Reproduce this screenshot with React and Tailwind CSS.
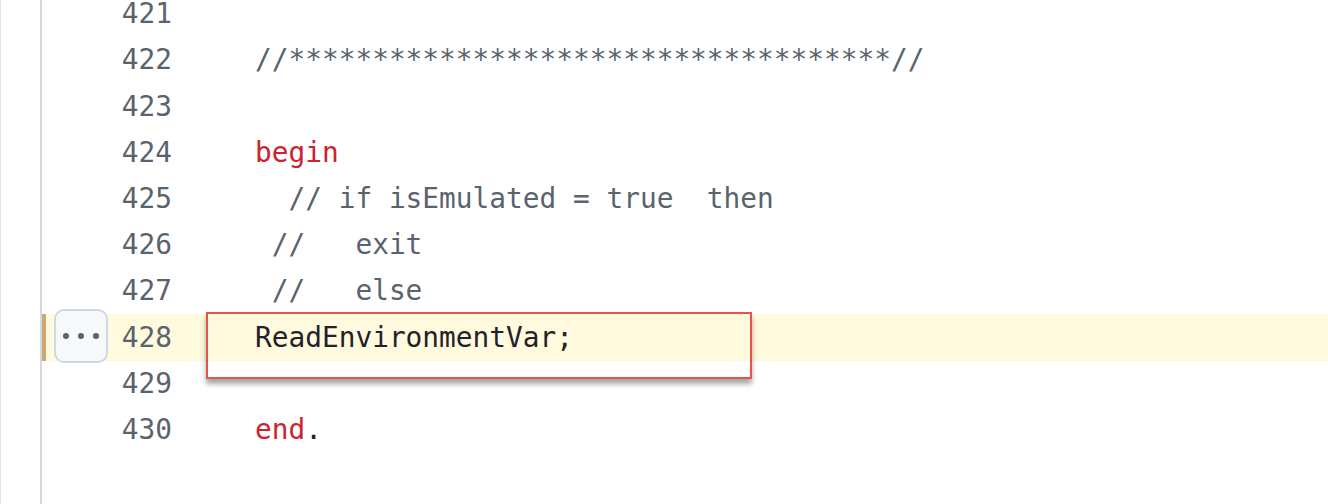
import React from "react";

const lines = [
  { n: 421, code: [] },
  { n: 422, code: [["c", "//" + "*".repeat(36) + "//"]] },
  { n: 423, code: [] },
  { n: 424, code: [["k", "begin"]] },
  { n: 425, code: [["c", "  // if isEmulated = true  then"]] },
  { n: 426, code: [["c", " //   exit"]] },
  { n: 427, code: [["c", " //   else"]] },
  { n: 428, code: [["t", "ReadEnvironmentVar;"]], active: true },
  { n: 429, code: [] },
  { n: 430, code: [["k", "end"], ["t", "."]] },
];

const tone = {
  c: "text-[#59636e]",
  k: "text-[#cf222e]",
  t: "text-[#1f2328]",
};

function Row({ line }) {
  return (
    <div className={`flex h-[46.2px] items-center ${line.active ? "bg-[#fff9dd]" : ""}`}>
      <div className={`h-full w-[4px] ${line.active ? "bg-[#cda872]" : ""}`} />
      <div className="relative h-full w-[126px] flex items-center justify-end text-[#59636e]">
        {line.active && (
          <button className="absolute left-[8px] top-[-5px] flex h-[54px] w-[54px] items-center justify-center gap-[9px] rounded-[10px] border-2 border-[#d1d9e0] bg-[#f6f8fa]">
            <span className="h-[6px] w-[6px] rounded-full bg-[#59636e]" />
            <span className="h-[6px] w-[6px] rounded-full bg-[#59636e]" />
            <span className="h-[6px] w-[6px] rounded-full bg-[#59636e]" />
          </button>
        )}
        {line.n}
      </div>
      <div className="pl-[83px] whitespace-pre">
        {line.code.map(([k, s], i) => (
          <span key={i} className={tone[k]}>
            {s}
          </span>
        ))}
      </div>
    </div>
  );
}

export default function App() {
  return (
    <div className="relative flex h-[504px] w-[1328px] overflow-hidden bg-white font-['DejaVu_Sans_Mono',monospace] text-[27.8px]">
      <div className="h-full w-[40px] border-l border-[#dfe4ea]" />
      <div className="h-full w-[2px] bg-[#d1d9e0]" />
      <div className="flex-1 mt-[-9px]">
        {lines.map((l) => (
          <Row key={l.n} line={l} />
        ))}
      </div>
      <div className="absolute left-[206px] top-[312px] h-[67px] w-[546px] border-2 border-[#e5534b] shadow-[0_5px_5px_rgba(0,0,0,0.35)]" />
    </div>
  );
}
